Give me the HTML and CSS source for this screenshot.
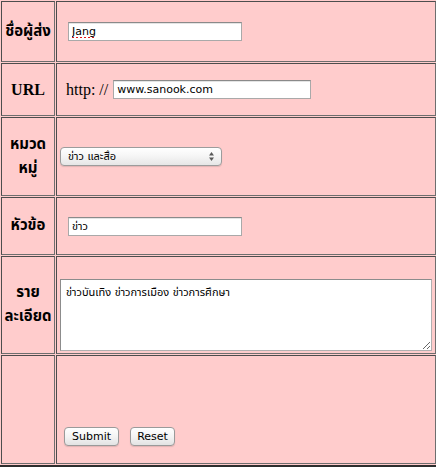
FILE: index.html
```html
<!DOCTYPE html>
<html lang="th">
<head>
<meta charset="utf-8">
<title>Form</title>
<link rel="stylesheet" href="styles.css">
</head>
<body>
<form class="post-form">
<table class="form-table">
<tr>
<td class="label row-sender">ชื่อผู้ส่ง</td>
<td class="field"><input class="text short spell" type="text" value="Jang"></td>
</tr>
<tr>
<td class="label latin row-url">URL</td>
<td class="field"><span class="proto">http: //</span><input class="text url" type="text" value="www.sanook.com"></td>
</tr>
<tr>
<td class="label row-cat">หมวด<br>หมู่</td>
<td class="field"><span class="select-wrap"><select class="cat"><option>ข่าว และสื่อ</option></select><svg class="arrows" width="5" height="9" viewBox="0 0 5 9"><polygon points="0,3.6 2.5,0 5,3.6" fill="#5a5a5a"/><polygon points="0,5.4 5,5.4 2.5,9" fill="#5a5a5a"/></svg></span></td>
</tr>
<tr>
<td class="label row-title">หัวข้อ</td>
<td class="field"><input class="text short" type="text" value="ข่าว"></td>
</tr>
<tr>
<td class="label row-detail">ราย<br>ละเอียด</td>
<td class="field field-bottom"><textarea class="details">ข่าวบันเทิง ข่าวการเมือง ข่าวการศึกษา</textarea></td>
</tr>
<tr>
<td class="label row-actions"></td>
<td class="field field-actions"><div class="actions"><input class="btn submit" type="submit" value="Submit"><input class="btn reset" type="reset" value="Reset"></div></td>
</tr>
</table>
</form>
</body>
</html>
```

FILE: styles.css
```css
html, body {
  margin: 0;
  padding: 0;
}

body {
  background: #ffcccc;
  font-family: "Liberation Serif", serif;
  color: #000;
}

.post-form {
  margin: 0;
}

.form-table {
  border-collapse: separate;
  border-spacing: 1px;
  background: #ffcccc;
  border-right: 1px solid #2e2e2e;
  border-bottom: 2px solid #2e2e2e;
}

.form-table td {
  box-sizing: border-box;
  border: 1px solid #4d4d4d;
  border-right-color: #6e6e6e;
  border-bottom-color: #6e6e6e;
  padding: 0 3px;
  vertical-align: middle;
}

.form-table td.label {
  width: 54px;
  min-width: 54px;
  max-width: 54px;
  padding: 0;
  text-align: center;
  font-weight: bold;
  font-size: 15px;
  line-height: 24px;
  font-family: "Tahoma", "Noto Sans Thai", "Loma", "Garuda", "Waree", "DejaVu Sans", sans-serif;
}

.form-table td.latin {
  font-family: "Liberation Serif", serif;
  font-size: 16px;
}

.field {
  width: 378px;
  font-size: 16px;
}

.row-sender { height: 61px; }
.row-url { height: 53px; }
.row-cat { height: 79px; }
.row-title { height: 58px; }
.row-detail { height: 98px; }
.row-actions { height: 109px; }

.text {
  box-sizing: border-box;
  height: 19px;
  margin: 0;
  padding: 0 3px;
  border: 1px solid #a9a9a9;
  border-top-color: #8a8a8a;
  background: #fff;
  font-size: 11px;
  font-family: "DejaVu Sans", "Noto Sans Thai", "Loma", sans-serif;
  color: #000;
  vertical-align: middle;
  box-shadow: inset 0 1px 0 #e4e4e4;
}

.short {
  width: 174px;
  margin-left: 8px;
}

.spell {
  text-decoration: underline dotted #e01818;
  text-decoration-thickness: 2px;
  text-underline-offset: 2px;
}

.proto {
  margin-left: 6px;
  margin-right: 5px;
  font-family: "Liberation Serif", serif;
  font-size: 16px;
  vertical-align: middle;
}

.url {
  width: 198px;
}

.select-wrap {
  position: relative;
  display: inline-block;
  vertical-align: middle;
  line-height: 0;
}

.cat {
  -webkit-appearance: none;
  appearance: none;
  box-sizing: border-box;
  width: 162px;
  height: 19px;
  margin: 0;
  padding: 0 18px 0 7px;
  border: 1px solid #9c9c9c;
  border-radius: 4px;
  background: linear-gradient(#ffffff, #f6f6f6 45%, #e6e6e6);
  box-shadow: 0 1px 1px rgba(0, 0, 0, 0.12);
  font-size: 11px;
  font-family: "DejaVu Sans", "Noto Sans Thai", "Loma", sans-serif;
  color: #000;
}

.arrows {
  position: absolute;
  right: 8px;
  top: 5px;
  pointer-events: none;
}

.form-table td.field-bottom {
  vertical-align: bottom;
  padding-bottom: 2px;
}

.details {
  display: block;
  box-sizing: border-box;
  width: 372px;
  height: 72px;
  margin: 0;
  padding: 4px 5px;
  border: 1px solid #8c8c8c;
  border-bottom-color: #b0b0b0;
  border-right-color: #b0b0b0;
  background: #fff;
  font-size: 11px;
  font-family: "DejaVu Sans", "Noto Sans Thai", "Loma", sans-serif;
  color: #000;
  resize: both;
}

.form-table td.field-actions {
  vertical-align: bottom;
  padding-bottom: 17px;
}

.actions {
  display: flex;
  gap: 11px;
  margin-left: 4px;
}

.btn {
  box-sizing: border-box;
  height: 19px;
  margin: 0;
  padding: 0;
  border: 1px solid #9a9a9a;
  border-radius: 4px;
  background: linear-gradient(#ffffff, #f4f4f4 50%, #e3e3e3);
  box-shadow: 0 1px 1px rgba(0, 0, 0, 0.12);
  font-size: 11px;
  font-family: "DejaVu Sans", sans-serif;
  color: #000;
}

.submit { width: 55px; }
.reset { width: 45px; }
```
